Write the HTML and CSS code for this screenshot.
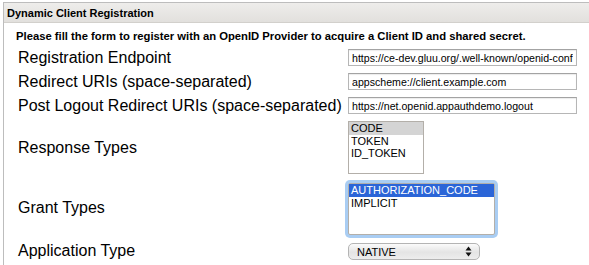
FILE: index.html
```html
<!DOCTYPE html>
<html lang="en">
<head>
    <meta charset="UTF-8">
    <meta name="viewport" content="width=device-width, initial-scale=1.0">
    <title>Dynamic Client Registration</title>
    <link rel="stylesheet" href="styles.css">
</head>
<body>
    <div class="panel">
        <div class="panel-title">Dynamic Client Registration</div>
        <div class="panel-body">
            <p class="intro">Please fill the form to register with an OpenID Provider to acquire a Client ID and shared secret.</p>

            <form class="reg-form">
                <label for="endpoint">Registration Endpoint</label>
                <input type="text" id="endpoint" class="field" value="https://ce-dev.gluu.org/.well-known/openid-configuration">

                <label for="redirect">Redirect URIs (space-separated)</label>
                <input type="text" id="redirect" class="field" value="appscheme://client.example.com">

                <label for="logout">Post Logout Redirect URIs (space-separated)</label>
                <input type="text" id="logout" class="field" value="https://net.openid.appauthdemo.logout">

                <label>Response Types</label>
                <ul class="listbox listbox-response">
                    <li class="selected">CODE</li>
                    <li>TOKEN</li>
                    <li>ID_TOKEN</li>
                </ul>

                <label>Grant Types</label>
                <ul class="listbox listbox-grant focused">
                    <li class="selected">AUTHORIZATION_CODE</li>
                    <li>IMPLICIT</li>
                </ul>

                <label>Application Type</label>
                <div class="popup">
                    <span>NATIVE</span>
                    <svg width="7" height="11" viewBox="0 0 7 11">
                        <path d="M3.5 0.5 L6.5 4.5 L0.5 4.5 Z" fill="#111"/>
                        <path d="M3.5 10.5 L6.5 6.5 L0.5 6.5 Z" fill="#111"/>
                    </svg>
                </div>
            </form>
        </div>
    </div>
</body>
</html>
```

FILE: styles.css
```css
body {
    margin: 0;
    overflow: hidden;
    font-family: "Liberation Sans", Arial, sans-serif;
    color: #000;
    background: #fff;
}

/* panel */
.panel {
    height: 270px;
    margin: 2px -12px 0 3px;
    border-top: 1px solid #bdbdbd;
    border-left: 1px solid #bdbdbd;
}

.panel-title {
    height: 18px;
    padding: 1px 0 0 3px;
    line-height: 18px;
    font-size: 11px;
    font-weight: bold;
    background: linear-gradient(#eeedeb, #e2e0dd);
    border-bottom: 1px solid #d2d0cc;
}

.panel-body {
    padding-left: 12px;
}

.intro {
    margin: 7px 0 0;
    font-size: 11.25px;
    line-height: 13px;
    font-weight: bold;
}

/* form rows */
.reg-form {
    display: grid;
    grid-template-columns: 330px 1fr;
    row-gap: 7px;
    align-items: center;
    margin-top: 6px;
    padding-left: 2px;
}

.reg-form label {
    font-size: 16px;
    line-height: 16px;
}

.field {
    box-sizing: border-box;
    width: 229px;
    height: 17px;
    margin: 0;
    padding: 0 3px;
    border: 1px solid #b6b6b6;
    border-top-color: #a3a3a3;
    box-shadow: inset 0 1px 1px rgba(0, 0, 0, 0.08);
    font-family: "Liberation Sans", Arial, sans-serif;
    font-size: 10.6px;
    color: #000;
    outline: none;
}

/* list boxes */
.listbox {
    list-style: none;
    margin: 0;
    padding: 0;
    box-sizing: border-box;
    border: 1px solid #b3afa9;
    background: #fff;
    font-size: 11px;
    line-height: 12.5px;
}

.listbox li {
    padding-left: 2px;
}

.listbox-response {
    width: 76px;
    height: 53px;
}

.listbox-response .selected {
    background: #d4d4d4;
}

.listbox-grant {
    width: 147px;
    height: 52px;
    margin-top: 2px;
}

.listbox-grant .selected {
    background: #2b65d7;
    color: #fff;
}

.focused {
    box-shadow: 0 0 0 3px #a9cdf3;
    border-radius: 2px;
}

/* popup menu */
.popup {
    box-sizing: border-box;
    width: 132px;
    height: 17px;
    margin-top: 1px;
    padding: 0 7px 0 8px;
    display: flex;
    align-items: center;
    justify-content: space-between;
    border: 1px solid #b4b4b4;
    border-radius: 5px;
    background: linear-gradient(#fbfbfb, #e4e4e4 55%, #ededed);
    font-size: 11px;
}
```
